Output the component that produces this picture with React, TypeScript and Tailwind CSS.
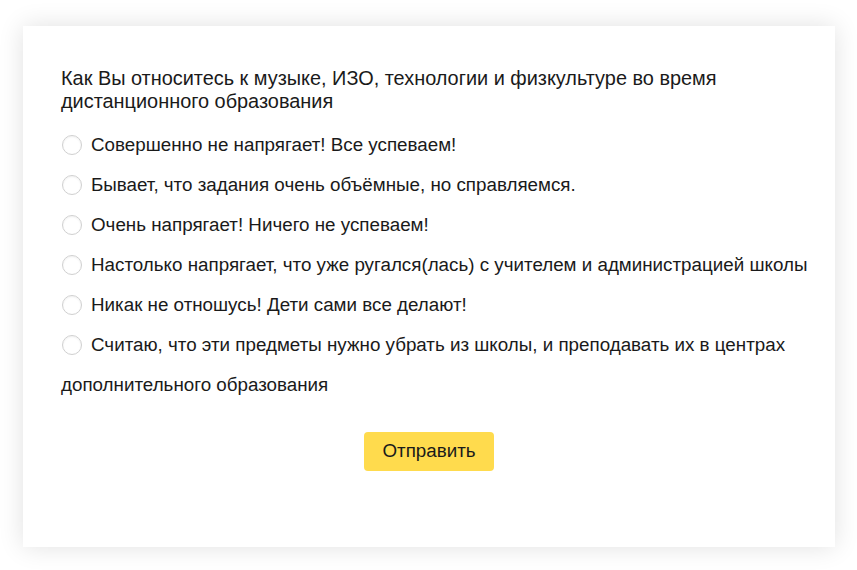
import React from 'react'

const options = [
  'Совершенно не напрягает! Все успеваем!',
  'Бывает, что задания очень объёмные, но справляемся.',
  'Очень напрягает! Ничего не успеваем!',
  'Настолько напрягает, что уже ругался(лась) с учителем и администрацией школы',
  'Никак не отношусь! Дети сами все делают!',
  'Считаю, что эти предметы нужно убрать из школы, и преподавать их в центрах дополнительного образования',
]

const App = () => {
  return (
    <div className="min-h-screen w-full bg-white pl-[23px] pr-[22px] pt-[26px] pb-[23px] font-['Liberation_Sans',Arial,sans-serif] text-[#1a1a1a]">
      <div className="h-[521px] w-[812px] bg-white pl-[38px] pr-[18px] pt-[41px] shadow-[0_0_24px_rgba(0,0,0,0.12)]">
        <div className="text-[19.9px] leading-[23px]">
          Как Вы относитесь к музыке, ИЗО, технологии и физкультуре во время дистанционного образования
        </div>
        <div className="mt-[12px] flex flex-col">
          {options.map((o, i) => (
            <label key={i} className="text-[18.8px] leading-[40px]">
              <span className="mr-[9px] ml-px inline-block h-[20px] w-[20px] rounded-full border border-[#d0d0d0] bg-white align-[-4px] shadow-[inset_0_1px_2px_rgba(0,0,0,0.06)]" />
              {o}
            </label>
          ))}
        </div>
        <div className="mt-[27px] flex justify-center pr-[20px]">
          <button className="h-[39px] w-[130px] rounded-[4px] bg-[#ffdb4d] text-[18.8px] text-[#1a1a1a]">
            Отправить
          </button>
        </div>
      </div>
    </div>
  )
}

export default App
